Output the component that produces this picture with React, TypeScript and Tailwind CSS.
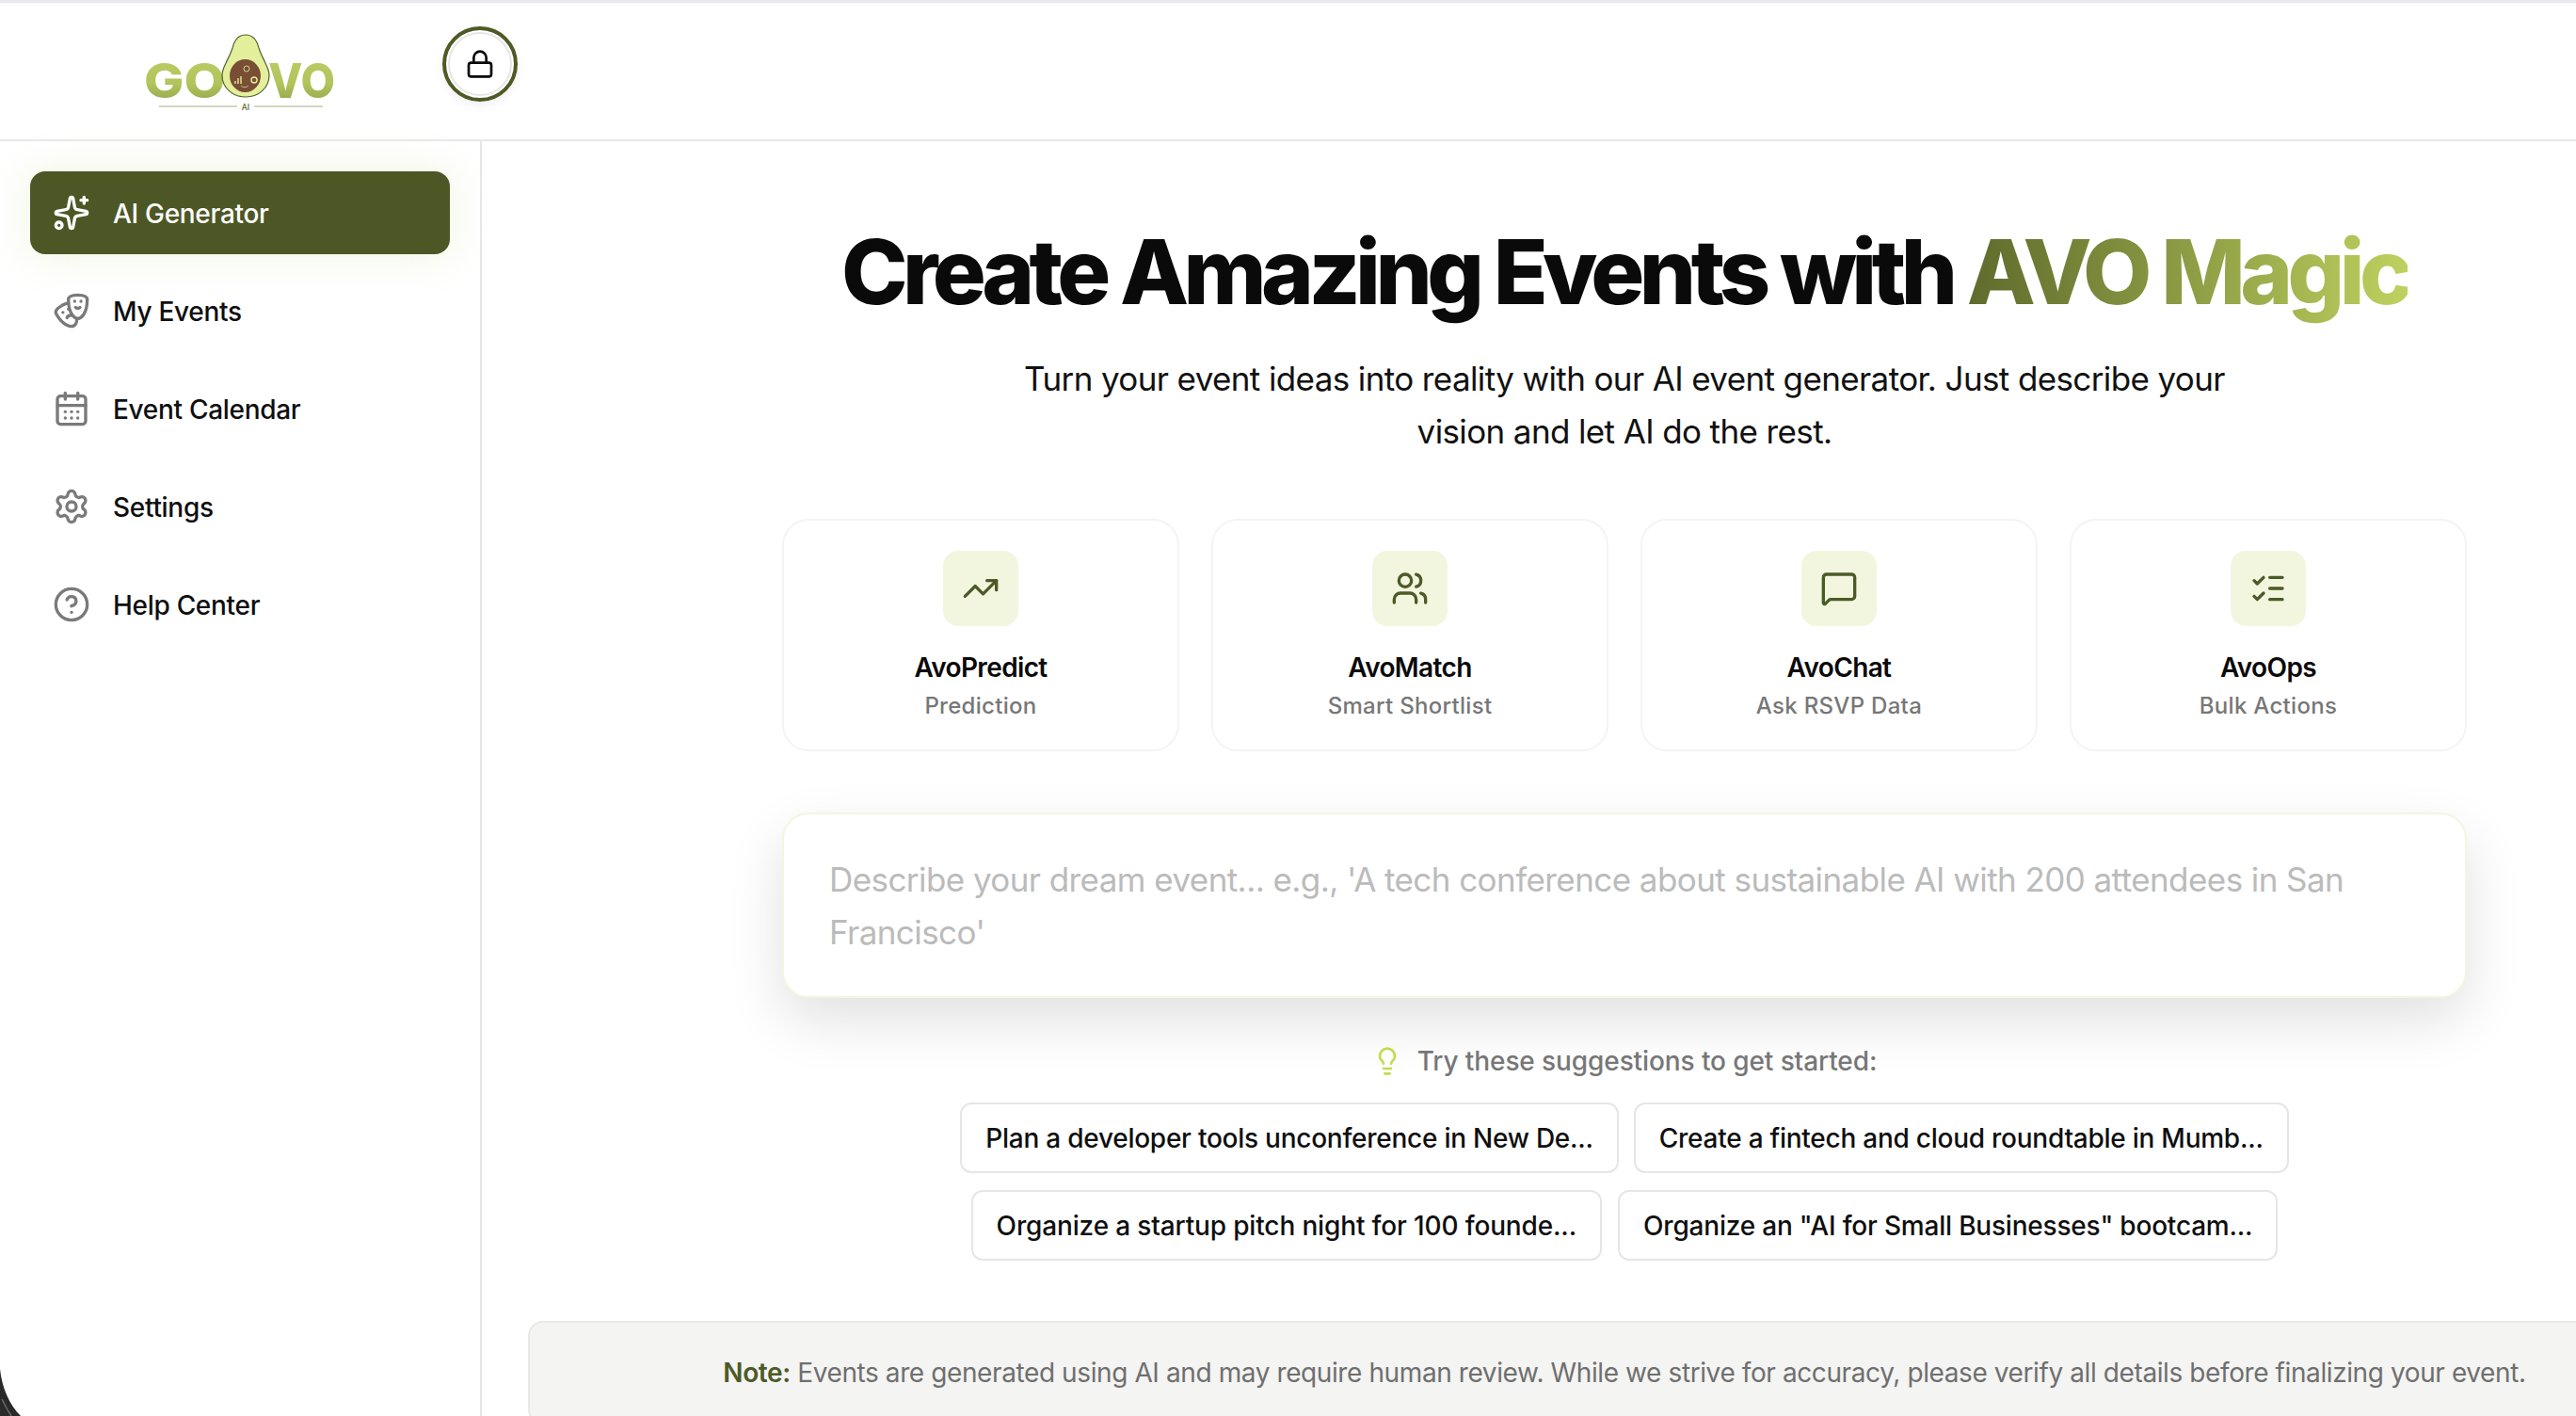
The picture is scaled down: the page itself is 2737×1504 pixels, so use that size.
import { Sparkles, Drama, CalendarDays, Settings, CircleHelp, Lock, TrendingUp, Users, MessageSquare, ListChecks, Lightbulb } from "lucide-react";

const nav = [
  { label: "AI Generator", Icon: Sparkles, active: true },
  { label: "My Events", Icon: Drama },
  { label: "Event Calendar", Icon: CalendarDays },
  { label: "Settings", Icon: Settings },
  { label: "Help Center", Icon: CircleHelp },
];

const cards = [
  { title: "AvoPredict", sub: "Prediction", Icon: TrendingUp },
  { title: "AvoMatch", sub: "Smart Shortlist", Icon: Users },
  { title: "AvoChat", sub: "Ask RSVP Data", Icon: MessageSquare },
  { title: "AvoOps", sub: "Bulk Actions", Icon: ListChecks },
];

function Logo() {
  return (
    <svg width="240" height="100" viewBox="0 0 240 100" className="block">
      <defs>
        <linearGradient id="logoText" x1="0" y1="0" x2="0" y2="1">
          <stop offset="0" stopColor="#bccd66" />
          <stop offset="0.55" stopColor="#b2c45c" />
          <stop offset="1" stopColor="#8c9e48" />
        </linearGradient>
      </defs>
      <text x="17" y="84" fontFamily="Inter, sans-serif" fontWeight="800" fontSize="51" textLength="86" lengthAdjust="spacingAndGlyphs" fill="url(#logoText)">GO</text>
      <text x="149" y="84" fontFamily="Inter, sans-serif" fontWeight="800" fontSize="51" textLength="71" lengthAdjust="spacingAndGlyphs" fill="url(#logoText)">VO</text>
      <path d="M125 17c-8 0-12 6-14 14-2 7-5 11-7 16-2 4-4 9-4 13 0 13 11 23 25 23s25-10 25-23c0-4-2-9-4-13-2-5-5-9-7-16-2-8-6-14-14-14z" fill="#e3ef9b" stroke="#55632d" strokeWidth="1.2" />
      <ellipse cx="124.5" cy="60.5" rx="16.5" ry="17.5" fill="#7a4d35" />
      <path d="M114 69v-3M117 69v-6M120 69v-8" stroke="#e3ef9b" strokeWidth="1.4" />
      <circle cx="134" cy="65" r="3" fill="none" stroke="#e3ef9b" strokeWidth="1.4" />
      <circle cx="126" cy="53" r="3" fill="none" stroke="#c9d58b" strokeWidth="1" />
      <path d="M120 71q4 3.5 8 0" fill="none" stroke="#c9d58b" strokeWidth="0.8" />
      <path d="M33 93h83M134 93h73" stroke="#aab08a" strokeWidth="1.2" />
      <text x="125" y="96.5" textAnchor="middle" fontFamily="Inter, sans-serif" fontWeight="500" fontSize="8.5" fill="#55632d">AI</text>
    </svg>
  );
}

export default function App() {
  return (
    <div className="relative h-screen w-full overflow-hidden bg-white font-['Inter',sans-serif] text-[#0a0a0a]">
      <div className="h-[3px] bg-[#e9e7f3]" />
      <header className="relative flex h-[147px] items-start border-b-2 border-[#e8e8e8]">
        <div className="flex w-[512px] justify-center pt-[17px]">
          <Logo />
        </div>
        <div className="absolute left-[470px] top-[25px] flex h-[80px] w-[80px] items-center justify-center rounded-full border-[4px] border-[#4c5a26] bg-white shadow-[0_4px_12px_rgba(0,0,0,0.06)]">
          <div className="flex h-[68px] w-[68px] items-center justify-center rounded-full border-2 border-[#e6e6e6]">
            <Lock size={32} strokeWidth={2} color="#0a0a0a" />
          </div>
        </div>
      </header>
      <div className="flex h-[1354px]">
        <aside className="w-[512px] shrink-0 border-r-2 border-[#e6e6e6] px-[32px] pt-[32px]">
          <nav className="flex w-[446px] flex-col gap-[16px]">
            {nav.map(({ label, Icon, active }) => (
              <div
                key={label}
                className={
                  active
                    ? "flex h-[88px] items-center gap-[24px] rounded-[16px] bg-[#4c5725] pl-[24px] text-[#fdfdfd] shadow-[0_0_40px_rgba(190,215,120,0.25)]"
                    : "flex h-[88px] items-center gap-[24px] rounded-[16px] pl-[24px] text-[#0f0f0f]"
                }
              >
                <Icon size={40} strokeWidth={2} color={active ? "#ffffff" : "#7a7a7a"} />
                <span className="pt-[2px] text-[28px] leading-[40px] font-medium tracking-[-0.3px]">{label}</span>
              </div>
            ))}
          </nav>
        </aside>
        <main className="flex w-[2428px] shrink-0 flex-col items-center pt-[86px]">
          <h1 className="shrink-0 text-[95px] leading-[106px] font-extrabold tracking-[-0.0584em] whitespace-nowrap">
            Create Amazing Events with{" "}
            <span className="bg-gradient-to-r from-[#5f6b2c] to-[#bed15f] bg-clip-text text-transparent">AVO Magic</span>
          </h1>
          <p className="mt-[32px] w-[1300px] shrink-0 text-center text-[35px] leading-[56px] tracking-[-0.62px] text-[#111111]">
            Turn your event ideas into reality with our AI event generator. Just describe your vision and let AI do the rest.
          </p>
          <div className="mt-[65px] grid w-[1790px] shrink-0 grid-cols-4 gap-[34px]">
            {cards.map(({ title, sub, Icon }) => (
              <div key={title} className="flex h-[247px] flex-col items-center rounded-[28px] border-2 border-[#f4f4f4] bg-white pt-[32px]">
                <div className="flex h-[80px] w-[80px] items-center justify-center rounded-[16px] bg-[#f2f6df]">
                  <Icon size={40} strokeWidth={2} color="#4c5a26" />
                </div>
                <div className="mt-[24px] text-[28px] leading-[40px] font-semibold tracking-[-0.63px]">{title}</div>
                <div className="mt-[3px] text-[24px] leading-[36px] font-medium tracking-[0.3px] text-[#777777]">{sub}</div>
              </div>
            ))}
          </div>
          <div className="mt-[65px] h-[197px] w-[1790px] shrink-0 rounded-[28px] border-2 border-[#f2f6df] bg-white px-[48px] pt-[41px] text-[35px] leading-[56px] tracking-[-0.57px] text-[#bbbbbb] shadow-[0_24px_60px_rgba(0,0,0,0.12)]">
            Describe your dream event... e.g., 'A tech conference about sustainable AI with 200 attendees in San Francisco'
          </div>
          <div className="mt-[47px] flex h-[40px] shrink-0 items-center gap-[16px] text-[28px] font-medium tracking-[-0.1px] text-[#777777]">
            <Lightbulb size={32} strokeWidth={2} color="#c6da4f" />
            <span>Try these suggestions to get started:</span>
          </div>
          <div className="mt-[24px] flex shrink-0 flex-col items-center gap-[18px]">
            <div className="flex gap-[16px]">
              <Chip text="Plan a developer tools unconference in New De..." tracking="tracking-[-0.25px]" />
              <Chip text="Create a fintech and cloud roundtable in Mumb..." tracking="tracking-[-0.25px]" />
            </div>
            <div className="flex gap-[17px]">
              <Chip text="Organize a startup pitch night for 100 founde..." tracking="tracking-[-0.15px]" />
              <Chip text={'Organize an "AI for Small Businesses" bootcam...'} tracking="tracking-[-0.2px]" />
            </div>
          </div>
          <div className="mt-[64px] flex h-[110px] w-[2330px] shrink-0 items-center justify-center rounded-[16px] border-2 border-[#e8e8e4] bg-[#f4f4f2] text-[28px] tracking-[-0.4px] text-[#6f6f6f]">
            <p><span className="font-semibold text-[#4c5a26]">Note:</span> Events are generated using AI and may require human review. While we strive for accuracy, please verify all details before finalizing your event.</p>
          </div>
        </main>
      </div>
      <svg width="24" height="54" viewBox="0 0 24 54" className="absolute bottom-0 left-0">
        <path d="M0 4C2 24 10 42 22 54H0z" fill="#2a2a2a" />
        <path d="M2 36C5 42 8 48 12 54" fill="none" stroke="#6a6a6a" strokeWidth="1.5" />
      </svg>
    </div>
  );
}

function Chip({ text, tracking }: { text: string; tracking: string }) {
  return (
    <div className={`flex h-[75px] items-center rounded-[12px] border-2 border-[#e6e6e6] bg-white px-[25px] text-[28px] font-medium whitespace-nowrap text-[#0f0f0f] ${tracking}`}>
      {text}
    </div>
  );
}
